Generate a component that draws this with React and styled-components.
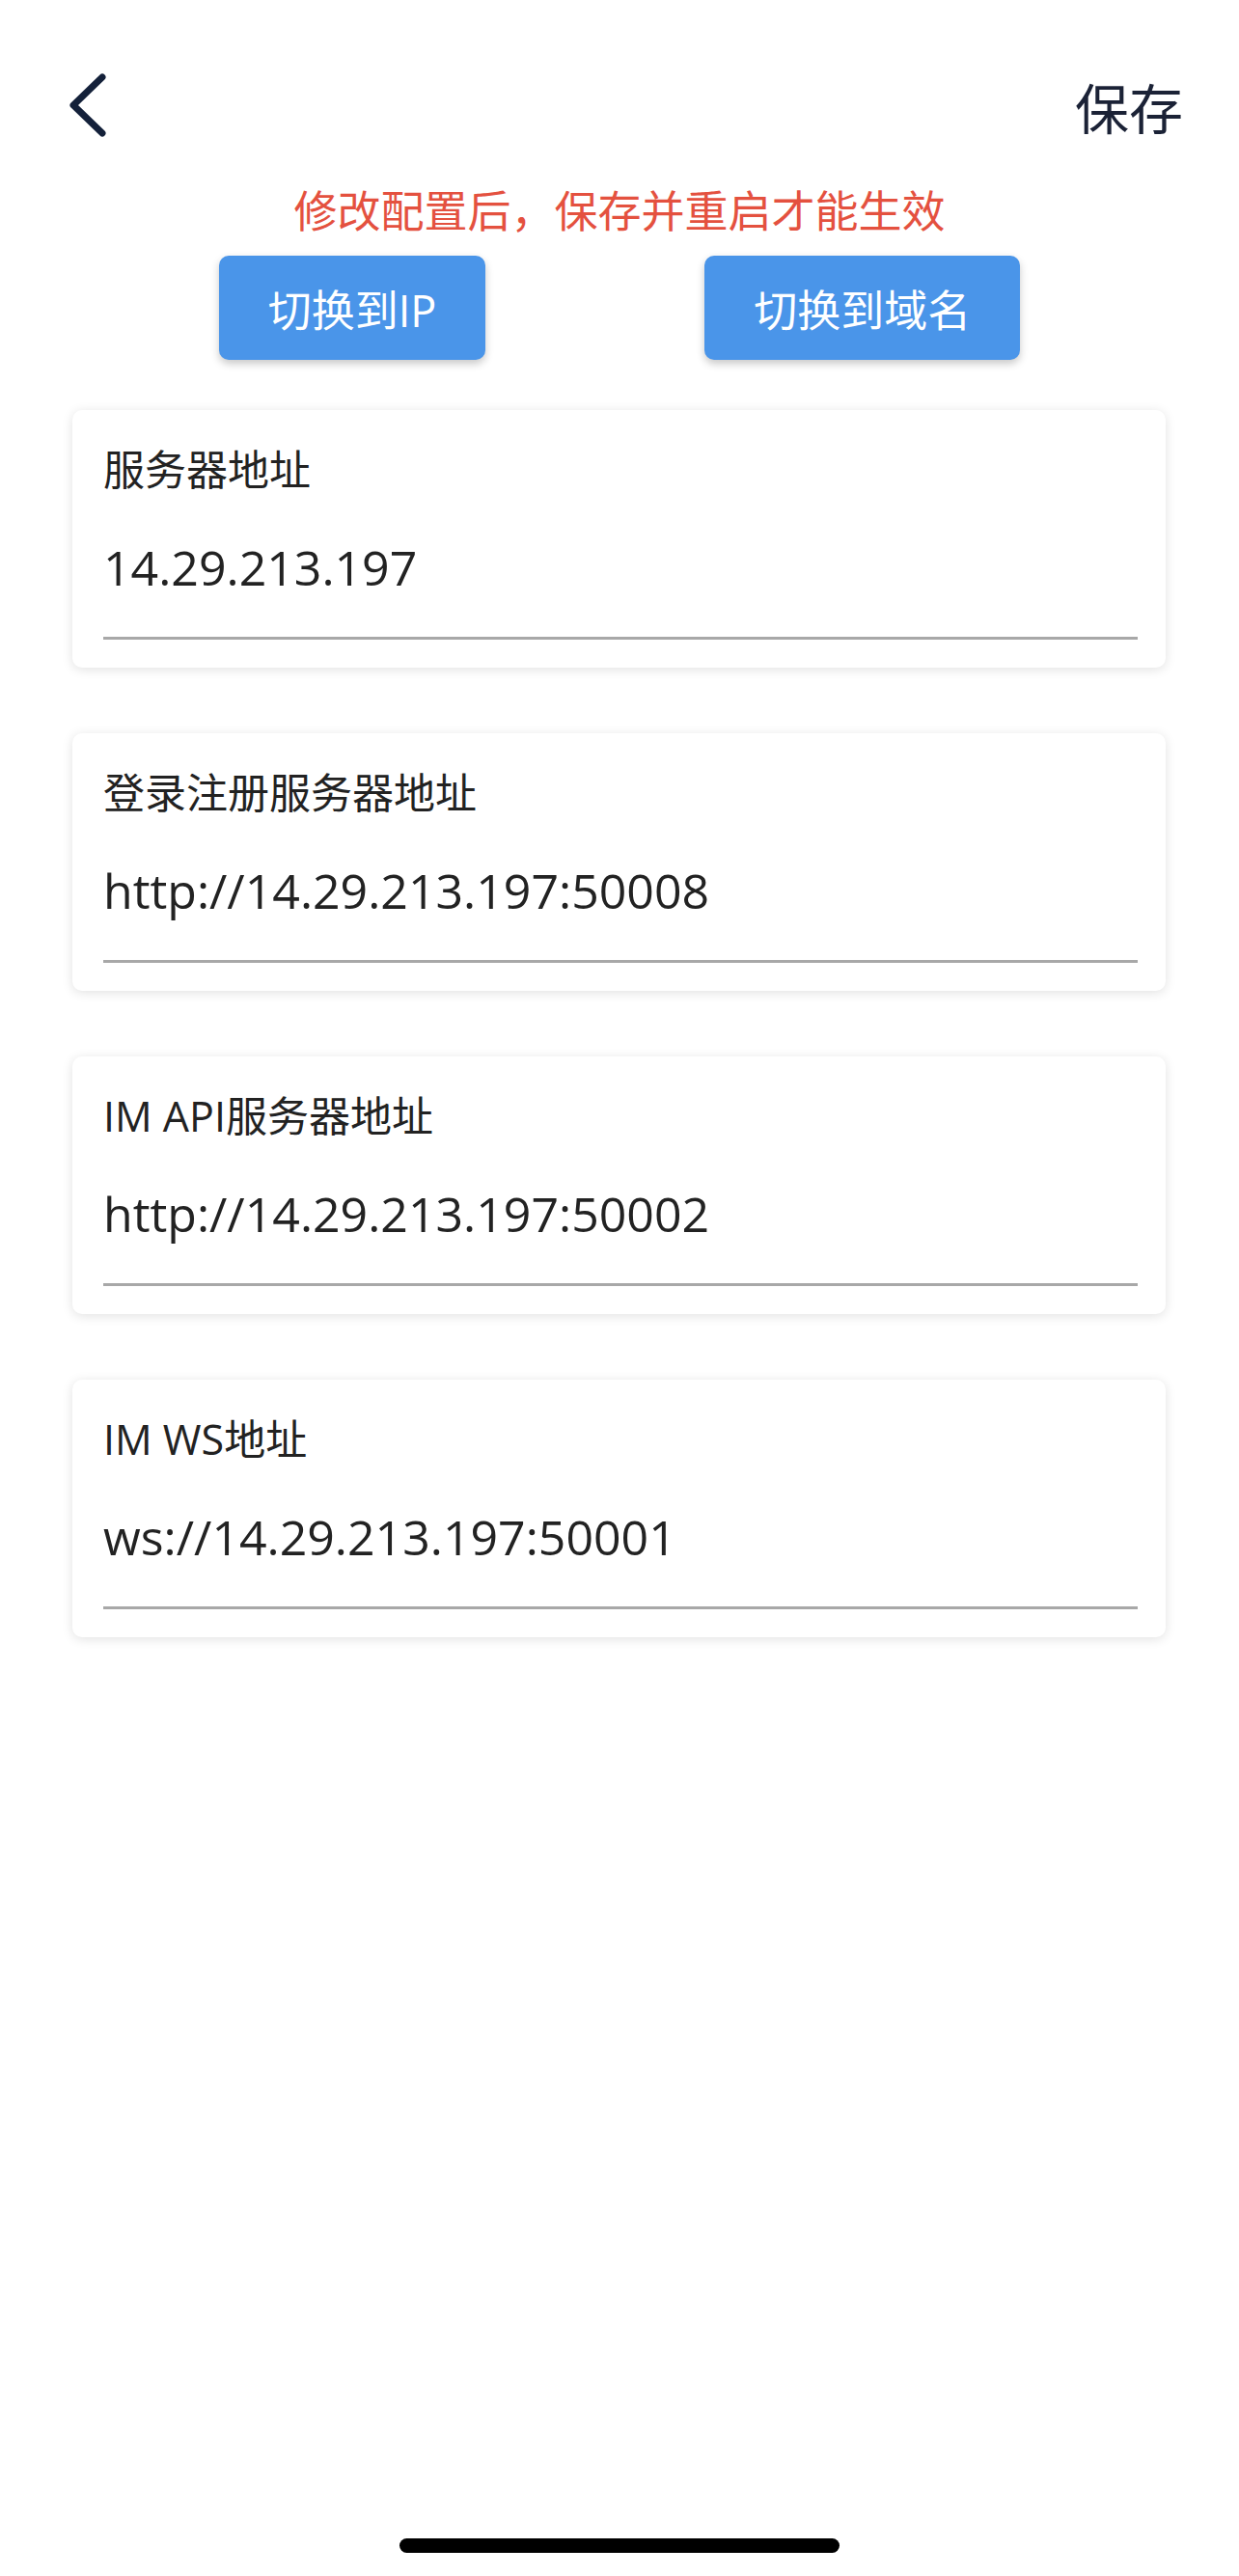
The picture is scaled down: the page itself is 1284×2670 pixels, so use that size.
import React from "react";
import styled, { createGlobalStyle } from "styled-components";

const GlobalStyle = createGlobalStyle`
  html, body {
    margin: 0;
    padding: 0;
    background: #ffffff;
  }
  body {
    font-family: "Open Sans", "Noto Sans CJK SC", sans-serif;
  }
`;

const fields = [
  { label: "服务器地址", value: "14.29.213.197" },
  { label: "登录注册服务器地址", value: "http://14.29.213.197:50008" },
  { label: "IM API服务器地址", value: "http://14.29.213.197:50002" },
  { label: "IM WS地址", value: "ws://14.29.213.197:50001" },
];

const App = () => {
  return (
    <Page>
      <GlobalStyle />
      <Header>
        <BackButton aria-label="back">
          <svg width="44" height="72" viewBox="0 0 44 72" fill="none">
            <polyline
              points="36,7 6,36 36,65"
              stroke="#14213a"
              strokeWidth="7"
              strokeLinecap="round"
              strokeLinejoin="round"
            />
          </svg>
        </BackButton>
        <SaveButton>保存</SaveButton>
      </Header>

      <Notice>修改配置后，保存并重启才能生效</Notice>

      <SwitchRow>
        <SwitchButton>切换到IP</SwitchButton>
        <SwitchButton>切换到域名</SwitchButton>
      </SwitchRow>

      <FieldList>
        {fields.map((f) => (
          <Card key={f.label}>
            <Label>{f.label}</Label>
            <Value>{f.value}</Value>
          </Card>
        ))}
      </FieldList>

      <HomeBar />
    </Page>
  );
};

export default App;

const Page = styled.div`
  width: 1284px;
  min-height: 2670px;
  background: #ffffff;
  display: flex;
  flex-direction: column;
  box-sizing: border-box;
  padding-top: 71px;
`;

const Header = styled.header`
  height: 76px;
  display: flex;
  justify-content: space-between;
  align-items: center;
  padding: 0 58px 0 70px;
`;

const BackButton = styled.button`
  background: none;
  border: none;
  padding: 0;
  display: flex;
  cursor: pointer;
`;

const SaveButton = styled.button`
  background: none;
  border: none;
  padding: 0;
  font-family: "Noto Sans CJK SC", sans-serif;
  font-size: 56px;
  color: #1b2236;
  cursor: pointer;
`;

const Notice = styled.div`
  margin-top: 40px;
  text-align: center;
  color: #e4513f;
  font-size: 45px;
  line-height: 60px;
  font-family: "Noto Sans CJK SC", sans-serif;
`;

const SwitchRow = styled.div`
  margin-top: 18px;
  display: flex;
  justify-content: space-evenly;
`;

const SwitchButton = styled.button`
  height: 108px;
  padding: 0 51px;
  border: none;
  border-radius: 10px;
  background: #4a95e9;
  color: #ffffff;
  font-family: "Open Sans", "Noto Sans CJK SC", sans-serif;
  font-size: 45px;
  box-shadow: 0 4px 8px rgba(0, 0, 0, 0.22);
  cursor: pointer;
`;

const FieldList = styled.div`
  margin: 52px 76px 0 75px;
  display: flex;
  flex-direction: column;
  gap: 68px;
`;

const Card = styled.div`
  background: #ffffff;
  border-radius: 10px;
  box-shadow: 0 2px 12px rgba(0, 0, 0, 0.12);
  padding: 32px 29px 29px 32px;
  display: flex;
  flex-direction: column;
`;

const Label = styled.div`
  font-family: "Open Sans", "Noto Sans CJK SC", sans-serif;
  font-size: 43px;
  line-height: 60px;
  color: #222222;
`;

const Value = styled.div`
  margin-top: 41px;
  font-family: "Open Sans", "Noto Sans", sans-serif;
  font-size: 50px;
  line-height: 60px;
  color: #222222;
  padding-bottom: 42px;
  border-bottom: 3px solid #a8a8a8;
`;

const HomeBar = styled.div`
  margin: auto auto 24px;
  width: 456px;
  height: 15px;
  border-radius: 8px;
  background: #000000;
`;
